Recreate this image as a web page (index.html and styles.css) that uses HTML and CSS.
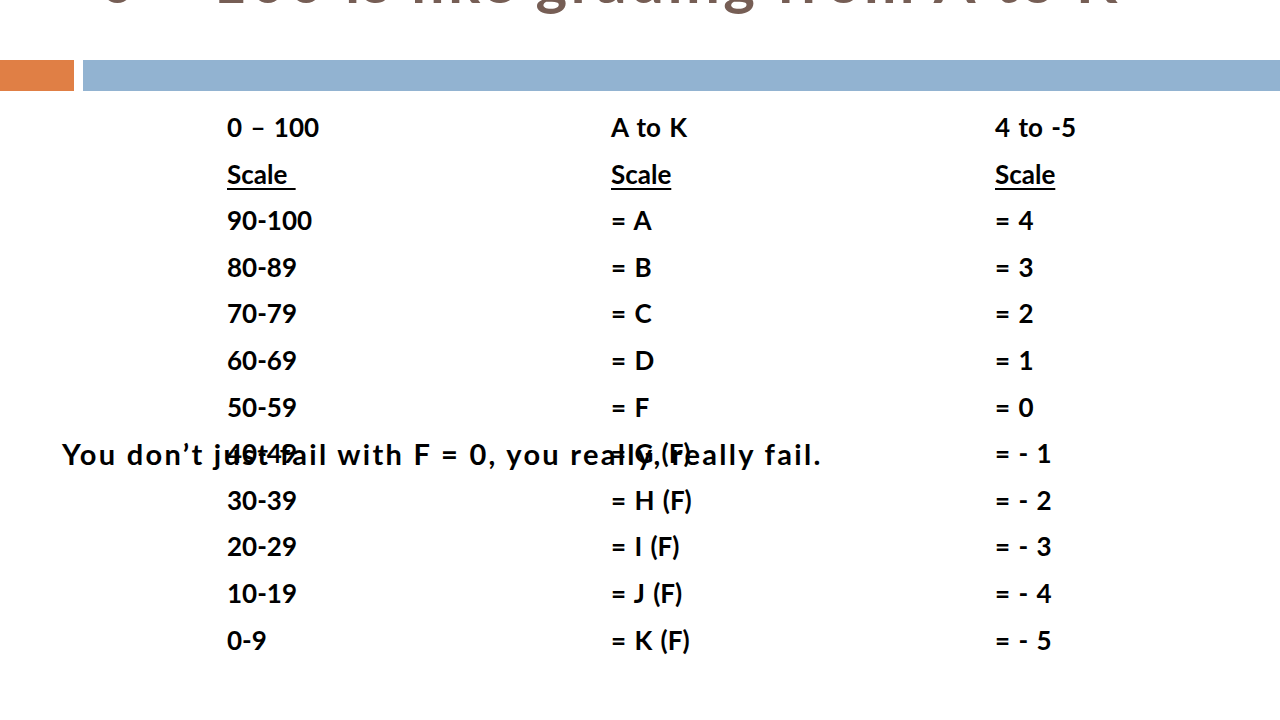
FILE: index.html
```html
<!DOCTYPE html>
<html lang="en">
<head>
<meta charset="utf-8">
<title>0 – 100 is like grading from A to K</title>
<link rel="stylesheet" href="styles.css">
</head>
<body>
<div class="slide">
  <header class="title-area">
    <h1 class="title">0 – 100 is like grading from A to K</h1>
  </header>
  <div class="bars">
    <div class="bar bar-orange"></div>
    <div class="bar bar-blue"></div>
  </div>
  <div class="content">
    <div class="grid">
      <div class="cell">0 – 100</div><div class="cell">A to K</div><div class="cell">4 to -5</div>
      <div class="cell"><u>Scale </u></div><div class="cell"><u>Scale</u></div><div class="cell"><u>Scale</u></div>
      <div class="cell">90-100</div><div class="cell">= A</div><div class="cell">= 4</div>
      <div class="cell">80-89</div><div class="cell">= B</div><div class="cell">= 3</div>
      <div class="cell">70-79</div><div class="cell">= C</div><div class="cell">= 2</div>
      <div class="cell">60-69</div><div class="cell">= D</div><div class="cell">= 1</div>
      <div class="cell">50-59</div><div class="cell">= F</div><div class="cell">= 0</div>
      <div class="cell">40-49</div><div class="cell">= G (F)</div><div class="cell">= - 1</div>
      <div class="cell">30-39</div><div class="cell">= H (F)</div><div class="cell">= - 2</div>
      <div class="cell">20-29</div><div class="cell">= I (F)</div><div class="cell">= - 3</div>
      <div class="cell">10-19</div><div class="cell">= J (F)</div><div class="cell">= - 4</div>
      <div class="cell">0-9</div><div class="cell">= K (F)</div><div class="cell">= - 5</div>
    </div>
    <p class="overlay">You don’t just fail with F = 0, you really, really fail.</p>
  </div>
</div>
</body>
</html>
```

FILE: styles.css
```css
html, body {
  margin: 0;
  padding: 0;
  background: #ffffff;
}

.slide {
  width: 1280px;
  height: 720px;
  overflow: hidden;
  position: relative;
  background: #ffffff;
  font-family: Lato, "Open Sans", sans-serif;
}

.title-area {
  height: 60px;
  overflow: hidden;
}

.title {
  margin: -50px 0 0 100px;
  font-size: 60px;
  line-height: 60px;
  font-weight: 700;
  color: #765e55;
  white-space: nowrap;
  letter-spacing: 3.4px;
}

.bars {
  display: flex;
  gap: 9px;
  height: 31px;
}

.bar-orange {
  width: 74px;
  background: #e07f45;
}

.bar-blue {
  flex: 1;
  background: #92b3d1;
}

.content {
  position: relative;
  padding: 13px 0 0 227px;
}

.grid {
  display: grid;
  grid-template-columns: 384px 384px 384px;
  grid-auto-rows: 46.6px;
}

.cell {
  font-size: 26px;
  line-height: 46.6px;
  font-weight: 700;
  color: #000000;
  white-space: pre;
  word-spacing: 2px;
}

.cell u {
  text-decoration-thickness: 2px;
  text-underline-offset: 4px;
}

.overlay {
  position: absolute;
  left: 62px;
  top: 340px;
  margin: 0;
  font-size: 29px;
  line-height: 46px;
  font-weight: 700;
  color: #000000;
  white-space: nowrap;
  letter-spacing: 2.3px;
}
```
